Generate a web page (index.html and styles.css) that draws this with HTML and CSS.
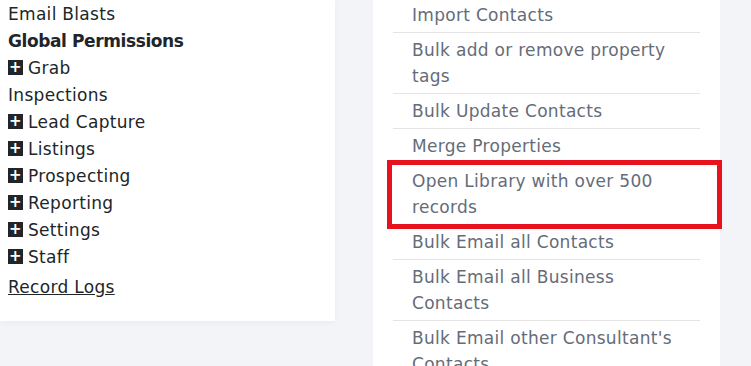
FILE: index.html
```html
<!DOCTYPE html>
<html lang="en">
<head>
  <meta charset="utf-8" />
  <title>Permissions</title>
  <link rel="stylesheet" href="styles.css">
</head>
<body>
  <div class="page">
    <div class="perm-card">
      <div class="perm-row">Email Blasts</div>
      <div class="perm-row perm-title">Global Permissions</div>
      <div class="perm-row"><span class="plus">+</span>Grab</div>
      <div class="perm-row">Inspections</div>
      <div class="perm-row"><span class="plus">+</span>Lead Capture</div>
      <div class="perm-row"><span class="plus">+</span>Listings</div>
      <div class="perm-row"><span class="plus">+</span>Prospecting</div>
      <div class="perm-row"><span class="plus">+</span>Reporting</div>
      <div class="perm-row"><span class="plus">+</span>Settings</div>
      <div class="perm-row"><span class="plus">+</span>Staff</div>
      <div class="perm-row log-row"><a href="#">Record Logs</a></div>
    </div>

    <div class="action-card">
      <ul class="action-list">
        <li>Import Contacts</li>
        <li>Bulk add or remove property tags</li>
        <li>Bulk Update Contacts</li>
        <li>Merge Properties</li>
        <li class="marked">Open Library with over 500 records</li>
        <li>Bulk Email all Contacts</li>
        <li>Bulk Email all Business Contacts</li>
        <li>Bulk Email other Consultant's Contacts</li>
      </ul>
    </div>
  </div>
</body>
</html>
```

FILE: styles.css
```css
body {
  margin: 0;
  background: #f3f4f7;
  font-family: "DejaVu Sans", "Liberation Sans", sans-serif;
  overflow: hidden;
}
.page {
  display: flex;
  align-items: flex-start;
  gap: 38px;
}
.perm-card {
  width: 327px;
  height: 321px;
  padding: 0 0 0 8px;
  background: #fff;
  box-shadow: 0 2px 6px rgba(0, 0, 0, 0.04);
  color: #212529;
  font-size: 17px;
  letter-spacing: 0.3px;
}
.perm-row {
  display: flex;
  align-items: center;
  height: 27px;
}
.perm-title {
  font-weight: 700;
  letter-spacing: -0.4px;
}
.plus {
  display: inline-flex;
  align-items: center;
  justify-content: center;
  width: 15px;
  height: 15px;
  margin-right: 5px;
  background: #212529;
  color: #fff;
  font-size: 15px;
  font-weight: 700;
  line-height: 1;
}
.log-row {
  margin-top: 3px;
}
.log-row a {
  color: #212529;
}
.action-card {
  width: 347px;
  height: 380px;
  background: #fff;
}
.action-list {
  list-style: none;
  margin: -2px 20px 0;
  padding: 0;
}
.action-list li {
  position: relative;
  padding: 4px 19px;
  line-height: 26px;
  font-size: 17px;
  letter-spacing: 0.3px;
  color: #656c79;
  border-bottom: 1px solid #e4e4e4;
}
.action-list li.marked::after {
  content: "";
  position: absolute;
  left: -6px;
  right: -22px;
  top: -4px;
  bottom: -5px;
  border: 5px solid #e8111e;
}
```
